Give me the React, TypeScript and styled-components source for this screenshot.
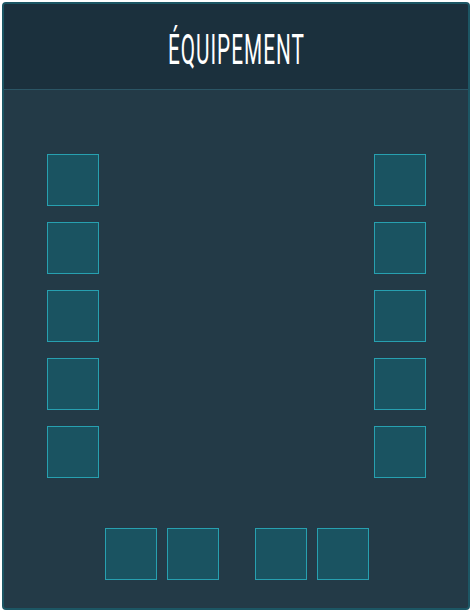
import React from 'react';
import styled, { createGlobalStyle } from 'styled-components';

const GlobalStyle = createGlobalStyle`
  html, body {
    margin: 0;
    padding: 0;
    background: #ffffff;
  }
  body {
    font-family: "Liberation Sans", Arial, sans-serif;
  }
`;

const Panel = styled.section`
  box-sizing: border-box;
  width: 468px;
  height: 608px;
  margin: 2px 0 0 2px;
  border: 2px solid #1c5664;
  border-radius: 4px;
  background: #233a47;
  display: flex;
  flex-direction: column;
  overflow: hidden;
`;

const Header = styled.header`
  height: 85px;
  flex: 0 0 auto;
  background: #1b303d;
  border-bottom: 1px solid #2b5565;
  display: flex;
  align-items: center;
  justify-content: center;
`;

const Title = styled.h1`
  margin: 0;
  display: inline-block;
  color: #ffffff;
  font-family: Roboto, "Liberation Sans", Arial, sans-serif;
  font-weight: 400;
  font-size: 42px;
  line-height: 1;
  letter-spacing: 2px;
  transform: scaleX(0.495);
  transform-origin: center;
  white-space: nowrap;
  padding-top: 7px;
`;

const Body = styled.div`
  flex: 1;
  display: flex;
  flex-direction: column;
  padding: 64px 42px 0 43px;
`;

const Columns = styled.div`
  display: flex;
  justify-content: space-between;
`;

const Column = styled.div`
  display: flex;
  flex-direction: column;
  gap: 16px;
`;

const BottomRow = styled.div`
  margin-top: 50px;
  display: flex;
  justify-content: center;
  gap: 36px;
`;

const Pair = styled.div`
  display: flex;
  gap: 10px;
`;

const Slot = styled.div`
  box-sizing: border-box;
  width: 52px;
  height: 52px;
  background: #1a5361;
  border: 1px solid #27a0b0;
`;

const slots = (n: number, prefix: string) =>
  Array.from({ length: n }, (_, i) => <Slot key={`${prefix}-${i}`} />);

export default function App() {
  return (
    <>
      <GlobalStyle />
      <Panel>
        <Header>
          <Title>ÉQUIPEMENT</Title>
        </Header>
        <Body>
          <Columns>
            <Column>{slots(5, 'l')}</Column>
            <Column>{slots(5, 'r')}</Column>
          </Columns>
          <BottomRow>
            <Pair>{slots(2, 'a')}</Pair>
            <Pair>{slots(2, 'b')}</Pair>
          </BottomRow>
        </Body>
      </Panel>
    </>
  );
}
